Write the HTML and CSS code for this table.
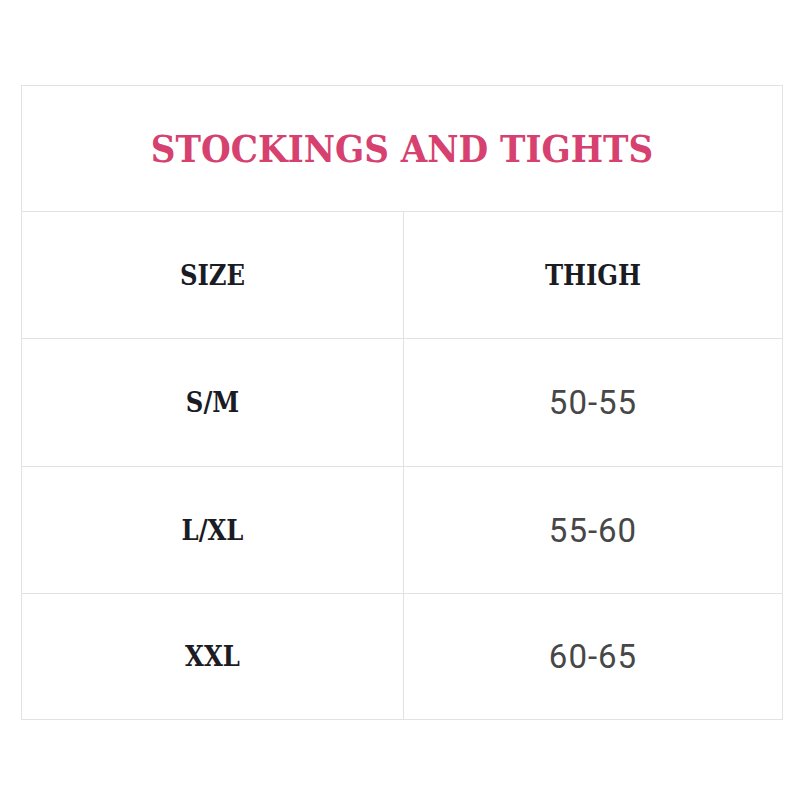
FILE: index.html
```html
<!DOCTYPE html>
<html>
<head>
<meta charset="utf-8">
<link rel="stylesheet" href="styles.css">
</head>
<body>
<div class="chart">
  <div class="cell title-cell"><h1 class="title">STOCKINGS AND TIGHTS</h1></div>
  <div class="cell head r1">SIZE</div>
  <div class="cell head r1">THIGH</div>
  <div class="cell label r2">S/M</div>
  <div class="cell value r2">50-55</div>
  <div class="cell label r3">L/XL</div>
  <div class="cell value r3">55-60</div>
  <div class="cell label r4">XXL</div>
  <div class="cell value r4">60-65</div>
</div>
</body>
</html>
```
FILE: styles.css
```css
html, body {
  margin: 0;
  padding: 0;
  background: #ffffff;
}
body {
  padding: 85px 0 0 21px;
}
.chart {
  display: grid;
  grid-template-columns: 382px 379px;
  grid-template-rows: 126px 127px 128px 127px 126px;
  width: 761px;
  border-top: 1px solid #e2e2e2;
  border-left: 1px solid #e2e2e2;
}
.cell {
  box-sizing: border-box;
  border-right: 1px solid #e2e2e2;
  border-bottom: 1px solid #e2e2e2;
  display: flex;
  align-items: center;
  justify-content: center;
}
.title-cell {
  grid-column: 1 / 3;
}
.title {
  margin: 0;
  font-family: "DejaVu Serif Condensed", "DejaVu Serif", serif;
  font-weight: bold;
  font-size: 38px;
  color: #d6416f;
}
.head, .label {
  font-family: "DejaVu Serif Condensed", "DejaVu Serif", serif;
  font-weight: bold;
  font-size: 27px;
  color: #1b1b24;
}
.value {
  font-family: Roboto, "Liberation Sans", sans-serif;
  font-size: 33px;
  letter-spacing: 1px;
  color: #474747;
}
```
